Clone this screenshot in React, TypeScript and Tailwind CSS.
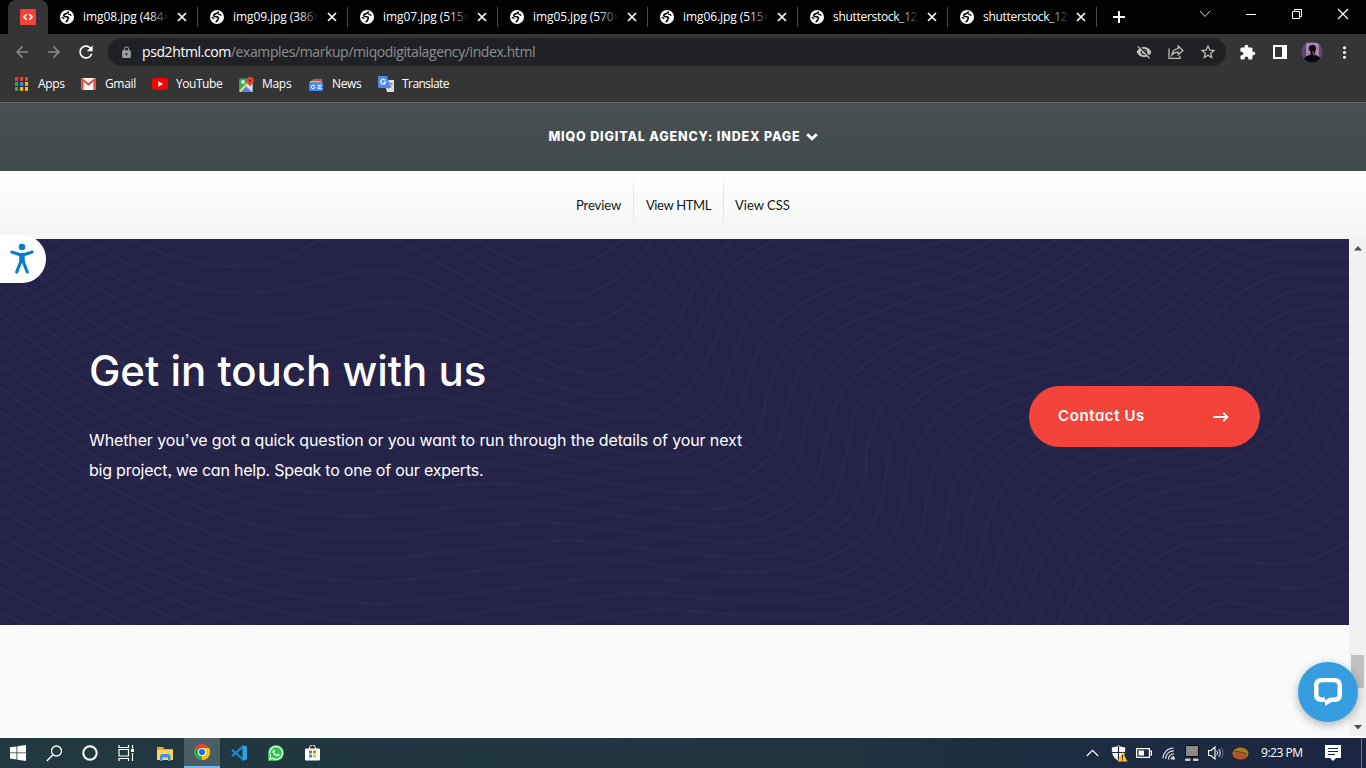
import React from "react";
import {
  MdArrowBack,
  MdArrowForward,
  MdRefresh,
  MdLock,
  MdVisibilityOff,
  MdStarBorder,
  MdExtension,
  MdMoreVert,
} from "react-icons/md";
import { FaWhatsapp } from "react-icons/fa";

type Pt = [number, number];

/* Contour lines of the banner, on a 4047 x 1158 canvas. */
const leftParts: Record<number, Pt[]> = {
  1: [[1420, 0], [1520, 55], [1600, 85]],
  2: [[1325, 0], [1365, 22], [1460, 85], [1580, 150]],
  3: [[370, -5], [480, 40], [600, 73], [750, 82], [860, 58], [920, 25], [980, 0], [1100, -12], [1200, 10], [1350, 90], [1480, 165], [1620, 238]],
  4: [[240, -5], [390, 75], [560, 140], [750, 162], [920, 135], [1110, 93], [1230, 110], [1350, 162], [1500, 240], [1640, 310]],
  5: [[145, -5], [360, 120], [580, 220], [775, 247], [960, 225], [1150, 190], [1270, 205], [1350, 235], [1540, 325], [1680, 383]],
  6: [[90, 0], [340, 175], [600, 302], [820, 337], [1010, 315], [1200, 285], [1350, 308], [1560, 400], [1720, 455]],
};
const lows: Pt[] = [[870, 415], [930, 490], [970, 560], [1000, 628], [1020, 697], [1040, 765], [1060, 830], [1090, 897], [1100, 962], [1130, 1028], [1150, 1093], [1180, 1150], [1210, 1215]];
const highs: Pt[] = [[1250, 378], [1300, 467], [1350, 538], [1400, 605], [1440, 670], [1500, 733], [1560, 792], [1625, 850], [1700, 905], [1765, 960], [1840, 1013], [1900, 1065], [1970, 1115]];
const starts = [-60, 0, 75, 150, 225, 300, 375, 445, 515, 590, 665, 735, 812];

const c2 = (pts: Pt[]): Pt[] => pts.map(([x, y]) => [x + 1350, y]);
const c3 = (pts: Pt[]): Pt[] => pts.map(([x, y]) => [x + 2580, y]);

const rightParts: Record<number, Pt[]> = {
  0: c2([[210, -8], [285, 5], [365, -8]]),
  1: c2([[320, 93], [430, 65], [525, -2]]),
  2: c2([[345, 178], [490, 125], [615, -5]]),
  3: c2([[380, 258], [500, 220], [600, 130], [692, -5]]),
  4: c2([[420, 332], [540, 285], [650, 165], [762, -5]]),
  5: c2([[455, 405], [580, 360], [680, 250], [750, 120], [852, -5]]),
  6: c2([[490, 472], [610, 435], [710, 325], [780, 195], [850, 85], [985, -5]]),
  7: c2([[525, 537], [650, 507], [750, 400], [820, 250], [900, 125], [1050, 45], [1230, 10], [1310, -4]]),
  8: [...c2([[560, 595], [710, 565], [810, 475], [850, 350], [900, 235], [1000, 140], [1120, 88]]), ...c3([[0, 63], [150, 35], [285, -5]])],
  9: [...c2([[600, 652], [750, 625], [860, 530], [900, 400], [950, 290], [1060, 190]]), ...c3([[0, 120], [150, 90], [300, 48], [410, -5]])],
  10: [...c2([[640, 707], [800, 680], [920, 590], [955, 450], [1010, 330], [1100, 243]]), ...c3([[0, 178], [150, 140], [280, 110], [400, 65], [508, -5]])],
  11: [...c2([[690, 760], [850, 732], [970, 640], [1008, 510], [1050, 390], [1130, 295]]), ...c3([[0, 240], [150, 185], [300, 150], [430, 105], [600, -5]])],
  12: [...c2([[730, 812], [900, 785], [1030, 690], [1068, 550], [1110, 430]]), ...c3([[0, 308], [120, 250], [300, 205], [450, 155], [570, 90], [692, -5]])],
  13: [...c2([[770, 860], [950, 835], [1085, 740], [1128, 600], [1165, 485]]), ...c3([[0, 390], [120, 310], [300, 255], [480, 200], [640, 105], [785, -5]])],
  14: [...c2([[820, 908], [1000, 885], [1140, 790], [1185, 660], [1205, 560]]), ...c3([[0, 495], [90, 400], [210, 330], [400, 280], [540, 235], [700, 135], [885, -5]])],
  15: [...c2([[860, 955], [1050, 930], [1190, 840], [1245, 720]]), ...c3([[22, 620], [70, 500], [160, 410], [300, 350], [450, 320], [610, 268], [760, 170], [985, -5]])],
  16: [...c2([[900, 1000], [1100, 970]]), ...c3([[0, 900], [60, 810], [78, 700], [100, 590], [160, 495], [260, 420], [400, 373], [600, 325], [740, 255], [870, 155], [980, 65], [1095, -5]])],
  17: [...c2([[950, 1043], [1130, 1020]]), ...c3([[0, 978], [90, 900], [130, 790], [150, 670], [210, 560], [300, 480], [420, 430], [600, 390], [750, 335], [900, 225], [1030, 100], [1150, 32], [1310, 5], [1475, 12]])],
  18: [...c2([[985, 1087], [1130, 1070]]), ...c3([[0, 1045], [110, 980], [180, 890], [202, 770], [240, 655], [310, 570], [430, 500], [600, 448], [780, 400], [900, 320], [1020, 200], [1130, 100], [1220, 62], [1350, 52], [1475, 58]])],
  19: [...c2([[1020, 1132], [1140, 1125]]), ...c3([[0, 1105], [130, 1050], [220, 970], [258, 860], [280, 745], [340, 645], [440, 565], [600, 505], [840, 438], [920, 385], [1030, 280], [1130, 170], [1240, 112], [1370, 98], [1475, 103]])],
  20: c3([[-10, 1162], [110, 1120], [240, 1035], [300, 940], [322, 830], [360, 725], [440, 635], [560, 565], [800, 505], [970, 438], [1080, 335], [1180, 220], [1280, 162], [1400, 145], [1475, 148]]),
  21: c3([[170, 1162], [290, 1080], [355, 980], [385, 840], [450, 720], [570, 620], [760, 560], [960, 520], [1090, 430], [1150, 330], [1210, 258], [1310, 212], [1475, 189]]),
  22: c3([[288, 1162], [375, 1060], [430, 900], [500, 780], [610, 680], [760, 625], [980, 585], [1110, 520], [1175, 440], [1220, 350], [1270, 290], [1340, 260], [1475, 243]]),
  23: c3([[382, 1162], [450, 1050], [500, 920], [580, 795], [700, 705], [850, 655], [1020, 628], [1150, 560], [1230, 480], [1280, 390], [1340, 330], [1475, 296]]),
  24: c3([[458, 1162], [530, 1000], [610, 860], [720, 765], [860, 710], [1040, 680], [1180, 620], [1270, 530], [1320, 430], [1380, 375], [1475, 353]]),
  25: c3([[524, 1162], [600, 1010], [690, 880], [800, 797], [950, 750], [1120, 720], [1270, 650], [1350, 550], [1400, 460], [1475, 416]]),
  26: c3([[590, 1162], [680, 990], [780, 880], [910, 815], [1080, 790], [1260, 750], [1380, 650], [1430, 550], [1475, 490]]),
  27: c3([[650, 1162], [740, 1015], [860, 905], [980, 858], [1150, 845], [1300, 805], [1410, 720], [1475, 640]]),
  28: c3([[718, 1162], [830, 1010], [950, 925], [1080, 905], [1230, 900], [1360, 870], [1475, 790]]),
  29: c3([[782, 1162], [900, 1030], [1000, 970], [1090, 959], [1240, 975], [1370, 955], [1475, 900]]),
  30: c3([[850, 1162], [980, 1055], [1090, 1025], [1200, 1038], [1310, 1048], [1400, 1030], [1475, 997]]),
  31: c3([[940, 1162], [1040, 1105], [1115, 1091], [1220, 1112], [1330, 1125], [1475, 1093]]),
};

function smooth(p: Pt[]): string {
  let d = `M${p[0][0]} ${p[0][1]}`;
  for (let i = 0; i < p.length - 1; i++) {
    const a = p[i - 1] ?? p[i];
    const b = p[i];
    const c = p[i + 1];
    const e = p[i + 2] ?? c;
    d += `C${(b[0] + (c[0] - a[0]) / 6).toFixed(1)} ${(b[1] + (c[1] - a[1]) / 6).toFixed(1)} ${(c[0] - (e[0] - b[0]) / 6).toFixed(1)} ${(c[1] - (e[1] - b[1]) / 6).toFixed(1)} ${c[0]} ${c[1]}`;
  }
  return d;
}

function contourLines(): string[] {
  const out: string[] = [];
  for (let n = 0; n <= 31; n++) {
    let left: Pt[] = leftParts[n] ?? [];
    if (n >= 7 && n <= 19) {
      const k = n - 7;
      const [lx, ly] = lows[k];
      const [hx, hy] = highs[k];
      const y0 = starts[k];
      const at = (t: number): Pt => [lx * t, ly - (ly - y0) * (1 - t) ** 2];
      const right = rightParts[n][0];
      left = [
        [0, y0],
        at(0.25),
        at(0.5),
        at(0.75),
        [lx, ly],
        [(lx + hx) / 2, (ly + hy) / 2],
        [hx, hy],
        [hx + (right[0] - hx) * 0.5, hy + (right[1] - hy) * 0.52],
      ];
    }
    out.push(smooth([...left, ...rightParts[n]]));
  }
  out.push(smooth([[0, 888], [260, 1022], [580, 1162]]));
  out.push(smooth([[0, 965], [200, 1068], [400, 1162]]));
  out.push(smooth([[0, 1045], [120, 1105], [245, 1162]]));
  out.push(smooth([[0, 1120], [85, 1162]]));
  return out;
}

const lines = contourLines();

const tabs = ["img08.jpg (484×", "img09.jpg (386×", "img07.jpg (515×", "img05.jpg (570×", "img06.jpg (515×", "shutterstock_122", "shutterstock_122"];

function Globe() {
  return (
    <svg width="14" height="14" viewBox="0 0 14 14" className="shrink-0">
      <circle cx="7" cy="7" r="7" fill="#fff" />
      <path d="M8.800 1.800C7.500 2.300 7.300 3.900 5.600 3.900 4 4 3.200 5.500 4.300 6.300c1.100.7 3.200 0 4 1.200.7 1.200-.6 1.500-.8 2.800-.2.800-1 1.300-1.800 1.600" stroke="#000" strokeWidth="1.600" fill="none" />
      <path d="M8 3.800c1.400.2 2.600.6 3.300 1.800M1.700 7.300c1 .2 1.700.9 2.500 1.400" stroke="#000" strokeWidth="1.300" fill="none" />
    </svg>
  );
}

function TabStrip() {
  return (
    <div className="flex h-[34px] bg-black">
      <div className="relative flex w-12 shrink-0 pl-2">
        <div className="flex h-[34px] w-10 items-center justify-center rounded-t-lg bg-[#353535]">
          <svg width="16" height="16" viewBox="0 0 16 16">
            <rect width="16" height="16" rx="1.5" fill="#f44336" />
            <path d="M6.6 5.2 4 8l2.6 2.8M9.4 5.2 12 8l-2.6 2.8" stroke="#fff" strokeWidth="1.6" fill="none" />
          </svg>
        </div>
      </div>
      {tabs.map((t, i) => (
        <div key={i} className={`flex h-[34px] items-center pl-3 ${i === 6 ? "w-[149px]" : "w-[150px]"}`}>
          <Globe />
          <div className={`relative ml-[9px] w-[86px] overflow-hidden whitespace-nowrap text-[12px] leading-4 text-white ${i > 4 ? "tracking-[-0.3px]" : "tracking-[-0.08px]"}`}>
            {t}
            <div className="absolute inset-y-0 right-0 w-5 bg-linear-to-r from-transparent to-black" />
          </div>
          <svg className={i === 6 ? "ml-[5px]" : "ml-[6px]"} width="14" height="14" viewBox="0 0 14 14">
            <path d="m3 3 8 8M11 3l-8 8" stroke="#fff" strokeWidth="1.700" />
          </svg>
          <div className="ml-auto h-5 w-px bg-[#4a4a4a]" />
        </div>
      ))}
      <div className="flex flex-1 items-center pl-[13px]">
        <svg width="18" height="18" viewBox="0 0 18 18">
          <path d="M9 3v12M3 9h12" stroke="#fff" strokeWidth="2" />
        </svg>
        <div className="mb-[6px] ml-auto flex items-center text-white">
          <svg width="161" height="14" viewBox="0 0 161 14" fill="none" stroke="#fff" strokeWidth="1">
            <path d="m5.500 4.500 5 5.500 5-5.500" stroke="#ddd" transform="translate(-.5 -.5)" />
            <path d="M51 7.500h10" />
            <path d="M97.500 4.500h7v7h-7zM99.500 4.500v-2h7v7h-2" />
            <path d="m143 2 10 10M153 2l-10 10" strokeWidth="1.200" />
          </svg>
          <div className="w-[10px]" />
        </div>
      </div>
    </div>
  );
}

function Toolbar() {
  return (
    <div className="flex h-9 items-center bg-[#353535] pl-[13px]">
      <MdArrowBack className="h-[18px] w-[18px] text-[#8b8b8b]" />
      <MdArrowForward className="ml-[14px] h-[18px] w-[18px] text-[#8b8b8b]" />
      <MdRefresh className="ml-[13px] h-5 w-5 text-white" />
      <div className="ml-[12px] flex h-7 w-[1118px] items-center rounded-full bg-[#202124] pl-[12px] pr-[9px]">
        <MdLock className="h-[13px] w-[13px] text-[#9aa0a6]" />
        <div className="ml-[9px] whitespace-nowrap text-[14px] leading-5 tracking-[-0.4px] text-[#8e8f91]">
          <span className="text-white">psd2html.com</span>/examples/markup/miqodigitalagency/index.html
        </div>
        <MdVisibilityOff className="ml-auto h-4 w-4 text-[#c4c4c4]" />
        <svg className="ml-4" width="16" height="16" viewBox="0 0 16 16" fill="none" stroke="#bbb" strokeWidth="1.300">
          <path d="M1 4.500v9.800h11v-2.500" />
          <path d="M10.200 2v2.600C6.300 5 4.300 7.300 3.800 11c1.500-2 3.500-2.900 6.400-2.900v2.700L15 6.400z" />
        </svg>
        <MdStarBorder className="ml-[15px] h-[18px] w-[18px] text-[#c4c4c4]" />
      </div>
      <MdExtension className="ml-[13px] h-[17px] w-[17px] text-white" />
      <svg className="ml-[17px]" width="14" height="14" viewBox="0 0 14 14">
        <path d="M0 0h14v14H0zM2 2v10h7V2z" fill="#fff" fillRule="evenodd" />
      </svg>
      <svg className="ml-[14px]" width="22" height="22" viewBox="0 0 22 22">
        <defs>
          <clipPath id="avatar"><circle cx="11" cy="11" r="10.500" /></clipPath>
        </defs>
        <g clipPath="url(#avatar)">
          <rect width="22" height="22" fill="#5d4773" />
          <path d="M5 2h13v14H5z" fill="#a487aa" />
          <path d="M2 22c0-6 4-7.500 7.500-8v-3.500c-2.500-2-2.500-6 1.500-6.500s5 3.500 3 6.500V14c4 .5 6.500 4 6.500 8z" fill="#09090d" />
          <path d="m11.500 10.500 2 4" stroke="#c0506f" strokeWidth="1.300" />
        </g>
      </svg>
      <MdMoreVert className="ml-[12px] h-[19px] w-[19px] text-white" />
    </div>
  );
}

const bookmarkClass = "flex items-center whitespace-nowrap text-[12px] leading-4 text-white";

function Bookmarks() {
  const dots = ["#ea4335", "#ea4335", "#ea4335", "#34a853", "#4285f4", "#fbbc05", "#34a853", "#fbbc05", "#fbbc05"];
  return (
    <div className="flex h-8 items-center bg-[#353535] pb-1 pl-[15px]">
      <div className={`${bookmarkClass} w-[66px] gap-[10px] tracking-[-0.3px]`}>
        <svg width="13" height="14" viewBox="0 0 13 14">
          {dots.map((c, i) => (
            <rect key={i} x={(i % 3) * 5} y={Math.floor(i / 3) * 5} width="3.200" height="3.800" fill={c} />
          ))}
        </svg>
        Apps
      </div>
      <div className={`${bookmarkClass} w-[71px] gap-[9px] tracking-[-0.35px]`}>
        <svg width="15" height="12" viewBox="0 0 15 12">
          <rect x=".5" width="14" height="12" rx="1" fill="#f2f2f2" />
          <path d="M1.500 12V2" stroke="#dd4b3e" strokeWidth="2" />
          <path d="M13.500 12V2" stroke="#dd4b3e" strokeWidth="2" />
          <path d="m1 1 6.500 5.500L14 1" stroke="#dd4b3e" strokeWidth="1.800" fill="none" />
        </svg>
        Gmail
      </div>
      <div className={`${bookmarkClass} w-[87px] gap-2 tracking-[-0.45px]`}>
        <svg width="16" height="12" viewBox="0 0 16 12">
          <rect width="16" height="12" rx="3" fill="#f00" />
          <path d="m6.300 3.300 4.700 2.700-4.700 2.700z" fill="#fff" />
        </svg>
        YouTube
      </div>
      <div className={`${bookmarkClass} w-[70px] gap-2 tracking-[-0.3px]`}>
        <svg width="15" height="15" viewBox="0 0 15 15">
          <rect y="1.500" width="13.500" height="13.500" rx="1.500" fill="#34a853" />
          <path d="M0 15 12 3l1.500 2v10z" fill="#e3e8ee" />
          <path d="m7 9 6 6H2z" fill="#4a86f0" />
          <path d="m1 14 11-11" stroke="#fbd04a" strokeWidth="1.800" />
          <circle cx="4" cy="5" r="2" fill="#d7eddd" />
          <path d="M11 0a3.700 3.700 0 0 1 3.700 3.700C14.700 6.500 12 7 11 10 10 7 7.300 6.500 7.300 3.700A3.700 3.700 0 0 1 11 0z" fill="#ea4335" />
          <circle cx="11" cy="3.700" r="1.300" fill="#8a1f17" />
        </svg>
        Maps
      </div>
      <div className={`${bookmarkClass} w-[69px] gap-2 tracking-[-0.35px]`}>
        <svg width="15" height="13" viewBox="0 0 15 13">
          <path d="m1.500 2 8-1.500 1 5z" fill="#34a853" />
          <path d="m4 1.500 9-.800.500 5H5z" fill="#ea4335" />
          <path d="M1 3h11v3H1z" fill="#fbbc04" />
          <rect y="4.200" width="14" height="8.800" rx="1" fill="#4285f4" />
          <path d="M6 7.200H4.200a1.800 1.800 0 1 0 1.700 1.800H4.700M8.500 7.200h4M8.500 9h3.500M8.500 10.700h4" stroke="#fff" strokeWidth="1" fill="none" />
        </svg>
        News
      </div>
      <div className={`${bookmarkClass} gap-[7px] tracking-[-0.55px]`}>
        <svg width="17" height="16" viewBox="0 0 17 16">
          <path d="M6 4h10v12H9z" fill="#dedede" />
          <path d="M9.500 7.500H15M12 6v1.500m2 0c-.500 2-2 3.500-4 5m1-4c.500 1.500 2 2.500 3.500 4" stroke="#78909c" strokeWidth="1" fill="none" />
          <path d="M1 0h8l3.500 12H1a1 1 0 0 1-1-1V1a1 1 0 0 1 1-1z" fill="#4a87ee" />
          <path d="M7.300 4.300A2.500 2.500 0 1 0 7.700 6H5.300" stroke="#fff" strokeWidth="1.200" fill="none" />
        </svg>
        Translate
      </div>
    </div>
  );
}

function SiteHeader() {
  return (
    <header>
      <div className="flex h-[69px] items-center justify-center gap-[5px] border-t border-[#686868] bg-linear-to-b from-[#495052] to-[#42494b] font-['Inter',sans-serif]">
        <span className="whitespace-nowrap text-[12.500px] font-extrabold leading-4 tracking-[0.85px] text-white">MIQO DIGITAL AGENCY: INDEX PAGE</span>
        <svg width="12" height="8" viewBox="0 0 12 8">
          <path d="m1.200 1.300 4.800 4.500 4.800-4.500" stroke="#fff" strokeWidth="2.900" fill="none" />
        </svg>
      </div>
      <nav className="flex h-[68px] justify-center bg-linear-to-b from-white to-[#f3f6f5] font-['Lato',sans-serif] text-[13px] text-[#151515]">
        <span className="flex w-[68px] items-center pl-[11px] pt-[2px] tracking-[-0.1px]">Preview</span>
        <div className="h-[60px] w-px bg-linear-to-b from-transparent via-[#dadddd] to-transparent" />
        <span className="flex w-[89px] items-center justify-center pt-[2px] tracking-[-0.35px]">View HTML</span>
        <div className="h-[60px] w-px bg-linear-to-b from-transparent via-[#dadddd] to-transparent" />
        <span className="flex w-[77px] items-center pl-[11px] pt-[2px]">View CSS</span>
      </nav>
    </header>
  );
}

function Banner() {
  return (
    <section className="relative h-[386px] bg-[#252347]">
      <svg className="absolute inset-0 h-full w-full" viewBox="0 0 4047 1158" preserveAspectRatio="none" fill="none" stroke="#2a274d" strokeWidth="11">
        {lines.map((d, i) => (
          <path key={i} d={d} />
        ))}
      </svg>
      <div className="relative flex h-full items-start justify-between pl-[89px] pr-[89px] font-['Inter',sans-serif] text-white [font-feature-settings:'cv11','ss03']">
        <div className="pt-[104px]">
          <h1 className="whitespace-nowrap text-[42px] font-medium leading-[56px] tracking-[-0.03px]">Get in touch with us</h1>
          <p className="mt-[26px] whitespace-nowrap text-[16px] leading-[30px] tracking-[-0.12px]">
            Whether you’ve got a quick question or you want to run through the details of your next
            <br />
            <span className="tracking-[-0.22px]">big project, we can help. Speak to one of our experts.</span>
          </p>
        </div>
        <button className="mt-[147px] flex h-[61px] w-[231px] items-center justify-between rounded-full bg-[#f4433a] pl-[29px] pr-[31px] text-[15px] font-semibold tracking-[0.6px]">
          Contact Us
          <svg width="16" height="12" viewBox="0 0 16 12" fill="none" stroke="#fff" strokeWidth="1.800">
            <path d="M.5 6h14M10.300 1.800 14.500 6l-4.200 4.200" />
          </svg>
        </button>
      </div>
      <div className="absolute -top-1 left-0 flex h-12 w-[46px] items-center justify-center rounded-r-full bg-white pr-[3px]">
        <svg width="24" height="32" viewBox="0 0 24 32" fill="none" stroke="#0a7ecb" strokeLinecap="round" strokeLinejoin="round">
          <circle cx="12" cy="4" r="3.300" fill="#0a7ecb" stroke="none" />
          <path d="m1.800 9 7.500 2.500h5.400L22.200 9" strokeWidth="3" />
          <path d="M10 12h4v7h-4z" fill="#0a7ecb" strokeWidth="1.500" />
          <path d="m11 18-4.300 11M13 18l4.300 11" strokeWidth="3.200" />
        </svg>
      </div>
    </section>
  );
}

function ScrollBar() {
  return (
    <div className="flex w-[17px] shrink-0 flex-col items-center bg-[#f1f1f1]">
      <svg className="mt-[7px]" width="8" height="5" viewBox="0 0 8 5"><path d="M0 4.500 4 0l4 4.500z" fill="#4d4d4d" /></svg>
      <div className="mt-[404px] h-[33px] w-[13px] bg-[#c1c1c1]" />
      <svg className="mt-[37px]" width="8" height="5" viewBox="0 0 8 5"><path d="M0 0h8L4 4.500z" fill="#4d4d4d" /></svg>
    </div>
  );
}

function Taskbar() {
  return (
    <div className="flex h-[30px] items-center bg-linear-to-r from-[#223941] via-[#20343f] via-60% to-[#1a2541]">
      <div className="flex w-9 justify-center">
        <svg width="16" height="16" viewBox="0 0 16 16" fill="#fff">
          <path d="M0 2.300 6.500 1.400v6.100H0zM7.300 1.300 16 0v7.500H7.300zM0 8.300h6.500v6.200L0 13.600zM7.300 8.300H16V16l-8.700-1.300z" />
        </svg>
      </div>
      <div className="flex w-9 justify-center">
        <svg width="17" height="17" viewBox="0 0 17 17" fill="none" stroke="#fff" strokeWidth="1.300">
          <circle cx="10.500" cy="6" r="5" /><path d="M7 9.700.8 16" />
        </svg>
      </div>
      <div className="flex w-9 justify-center">
        <svg width="16" height="16" viewBox="0 0 16 16"><circle cx="8" cy="8" r="6.700" fill="none" stroke="#fff" strokeWidth="2" /></svg>
      </div>
      <div className="flex w-9 justify-center">
        <svg width="17" height="16" viewBox="0 0 17 16" fill="none" stroke="#fff" strokeWidth="1.200">
          <path d="M1 0v2.500h9.500V0M1 16v-2.500h9.500V16M1 4.500h9.500v6.500H1zM14.500 0v3.500M14.500 8v8" /><path d="M13 4h3v3h-3z" fill="#fff" stroke="none" />
        </svg>
      </div>
      <div className="flex w-10 justify-center pl-[2px]">
        <svg width="17" height="15" viewBox="0 0 17 15">
          <path d="M0 1h6l1.500 2H16v11H0z" fill="#e8a924" />
          <path d="M0 4h16v10H0z" fill="#fcd462" />
          <path d="M3 15V9.500L4.500 8h7.500l1.500 1.500V15h-2.500v-3.500H5.500V15z" fill="#3d94e0" />
        </svg>
      </div>
      <div className="flex h-full w-9 items-center justify-center border-b-2 border-[#76b9ed] bg-[#4b5d65]">
        <svg width="16" height="16" viewBox="0 0 16 16">
          <path d="M8 8 1.070 4A8 8 0 0 1 14.930 4z" fill="#ea4335" />
          <path d="M8 8 14.930 4A8 8 0 0 1 8 16z" fill="#fbc116" />
          <path d="M8 8v8A8 8 0 0 1 1.070 4z" fill="#34a853" />
          <path d="M8 4h6.930A8 8 0 0 1 8 16l3.460-6z" fill="#fbc116" />
          <circle cx="8" cy="8" r="4" fill="#fff" /><circle cx="8" cy="8" r="3.100" fill="#1a73e8" />
        </svg>
      </div>
      <div className="flex w-[38px] justify-center">
        <svg width="16" height="16" viewBox="0 0 16 16">
          <path d="M1 4.800 11.500 14M1 11.200 11.500 2" stroke="#1c86cf" strokeWidth="2.300" />
          <path d="m11.500 0 4.500 1.800v12.400L11.500 16z" fill="#2ba3ec" />
        </svg>
      </div>
      <div className="flex w-9 justify-center">
        <div className="flex h-4 w-4 items-center justify-center rounded-full rounded-bl-sm bg-[#2fc352]">
          <FaWhatsapp className="h-4 w-4 text-white" />
        </div>
      </div>
      <div className="flex w-[37px] justify-center">
        <svg width="15" height="16" viewBox="0 0 15 16">
          <path d="M4.500 5V3a3 3 0 0 1 6 0v2" stroke="#eee" fill="none" />
          <rect y="3.500" width="15" height="12" rx="1" fill="#fff" />
          <path d="M4 5.500h3v3H4z" fill="#f25022" /><path d="M8 5.500h3v3H8z" fill="#7fba00" /><path d="M4 9.500h3v3H4z" fill="#00a4ef" /><path d="M8 9.500h3v3H8z" fill="#ffb900" />
        </svg>
      </div>
      <div className="ml-auto flex h-full items-center">
        <svg width="13" height="8" viewBox="0 0 13 8" fill="none" stroke="#fff" strokeWidth="1.200"><path d="m.8 7 5.700-5.700L12.200 7" /></svg>
        <svg className="ml-3" width="17" height="17" viewBox="0 0 17 17">
          <path d="M7.500 0c2 1.500 4 2 7 2 0 7-1 11-7 14C1.500 13 .5 9 .5 2c3 0 5-.500 7-2z" fill="#fff" stroke="#111" strokeWidth=".6" />
          <path d="M7.500 1v14M1 7.500h13" stroke="#18243c" strokeWidth="1.200" />
          <path d="m11.500 7 5 9.500h-10z" fill="#fcbf1e" /><path d="M11.500 10v3.500m0 .7v1.200" stroke="#222" />
        </svg>
        <svg className="ml-[8px]" width="16" height="10" viewBox="0 0 16 10">
          <path d="M.6.600h12.800v8.800H.6zM14 3h1.400v4H14" fill="none" stroke="#fff" strokeWidth="1.200" /><path d="M2.500 2.500H8v5H2.500z" fill="#fff" />
        </svg>
        <svg className="ml-[10px]" width="14" height="13" viewBox="0 0 14 13" fill="none" stroke="#ddd" strokeWidth="1.200">
          <path d="M1 11.500A10.500 10.500 0 0 1 11.500 1M3.700 12A7.700 7.700 0 0 1 12 4M6.500 12.500A5 5 0 0 1 12 7M9 12.500a2.600 2.600 0 0 1 3-2.800" /><circle cx="11.500" cy="11.500" r="1.300" fill="#fff" stroke="none" />
        </svg>
        <svg className="ml-[8px]" width="16" height="17" viewBox="0 0 16 17">
          <path d="M1.500.500h13v11h-13z" fill="#8b8b8b" stroke="#0a0a0a" /><rect x="1" y="13.500" width="5.500" height="2.500" rx="1" fill="#ccc" /><rect x="9" y="13.500" width="5.500" height="2.500" rx="1" fill="#ccc" />
        </svg>
        <svg className="ml-[8px]" width="17" height="14" viewBox="0 0 17 14" fill="none" stroke="#fff">
          <path d="M.6 4.500H3l4-3.500v12L3 9.500H.6z" strokeWidth="1.100" /><path d="M8.700 4.800a3 3 0 0 1 0 4.400M10.700 3a6 6 0 0 1 0 8" /><path d="M13 1.500a9 9 0 0 1 0 11" stroke="#6d7789" />
        </svg>
        <svg className="ml-[7px]" width="17" height="13" viewBox="0 0 17 13">
          <ellipse cx="8.500" cy="6.500" rx="8" ry="5.900" fill="#a97b22" /><path d="M.5 6c4-3 9 3 15 1.500C14 14 1 14 .5 6z" fill="#b65127" /><path d="M2 4.500c5-1 8 2.500 13 2" stroke="#5a4423" strokeWidth="1.200" fill="none" />
        </svg>
        <span className="ml-[12px] w-[43px] whitespace-nowrap text-[12px] leading-4 tracking-[-0.45px] text-white">9:23 PM</span>
        <svg className="ml-[21px]" width="16" height="16" viewBox="0 0 16 16">
          <path d="M0 0h16v13h-5l-3 3-3-3H0z" fill="#fff" /><path d="M3 3.500h10M3 6.500h10M3 9.500h7" stroke="#1a2541" />
        </svg>
        <div className="ml-5 h-full w-px bg-[#65708a]" />
        <div className="w-1" />
      </div>
    </div>
  );
}

export default function App() {
  return (
    <div className="relative flex h-[768px] w-[1366px] flex-col overflow-hidden bg-white font-['Open_Sans','Noto_Sans',sans-serif]">
      <TabStrip />
      <Toolbar />
      <Bookmarks />
      <SiteHeader />
      <div className="flex h-[497px]">
        <main className="w-[1349px] bg-[#f9fafc]">
          <Banner />
        </main>
        <ScrollBar />
      </div>
      <div className="h-[2px] bg-white" />
      <Taskbar />
      <div className="absolute left-[1298px] top-[662px] flex h-[60px] w-[60px] items-center justify-center rounded-full bg-[#359de0] shadow-[0_3px_10px_rgba(0,0,0,0.3)]">
        <svg width="28" height="28" viewBox="0 0 28 28">
          <path d="M8 0h12c5 0 8 2.500 8 7.300v9.400c0 4.800-3 7.300-7.500 7.300h-2.800L11 28v-4H8c-5 0-8-2.500-8-7.300V7.300C0 2.500 3 0 8 0zM8.500 4.300c-2.600 0-4 1.100-4 3.400v8.600c0 2.300 1.400 3.200 3.800 3.200H11v3l5-3h3.700c2.400 0 3.800-.9 3.800-3.200V7.700c0-2.300-1.400-3.400-4-3.400z" fill="#fff" fillRule="evenodd" />
        </svg>
      </div>
    </div>
  );
}
